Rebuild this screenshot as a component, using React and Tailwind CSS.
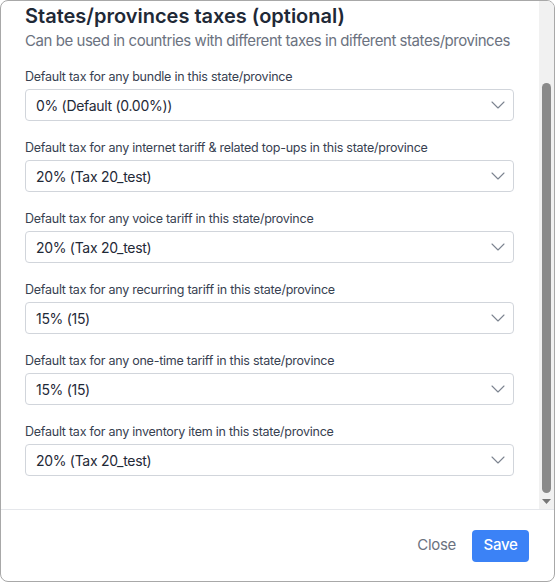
import React from 'react';

const FIELDS = [
  { label: 'Default tax for any bundle in this state/province', value: '0% (Default (0.00%))' },
  { label: 'Default tax for any internet tariff & related top-ups in this state/province', value: '20% (Tax 20_test)' },
  { label: 'Default tax for any voice tariff in this state/province', value: '20% (Tax 20_test)' },
  { label: 'Default tax for any recurring tariff in this state/province', value: '15% (15)' },
  { label: 'Default tax for any one-time tariff in this state/province', value: '15% (15)' },
  { label: 'Default tax for any inventory item in this state/province', value: '20% (Tax 20_test)' },
];

const Chevron = () => (
  <svg width="14" height="8" viewBox="0 0 14 8" fill="none" stroke="#7c8490" strokeWidth="1.1" strokeLinecap="round" strokeLinejoin="round">
    <path d="M1 1l6 6 6-6" />
  </svg>
);

const SelectField = ({ label, value }) => (
  <div>
    <label className="block text-[12.5px] leading-[18px] tracking-[-0.25px] text-[#374151] mb-[3px]">{label}</label>
    <div className="h-8 border border-[#d1d5db] rounded-[4px] flex items-center justify-between pl-[10px] pr-[8px]">
      <span className="text-[14px] tracking-[-0.3px] text-[#1f2937]">{value}</span>
      <Chevron />
    </div>
  </div>
);

// fake scrollbar rail, list is scrolled to the end
const ScrollRail = () => (
  <div className="w-[15px] shrink-0 bg-[#f1f1f1] flex flex-col items-center">
    <div className="flex-1 w-full flex flex-col justify-end pt-[82px] pb-px">
      <div className="mx-auto w-[9px] flex-1 rounded-full bg-[#8a8a8a]" />
    </div>
    <div className="h-[15px] flex items-center justify-center">
      <svg width="9" height="5" viewBox="0 0 9 5">
        <path d="M0 0h9L4.5 5z" fill="#777" />
      </svg>
    </div>
  </div>
);

export default function App() {
  return (
    <div className="w-[555px] h-[582px] bg-white border border-[#a8a8a8] rounded-lg flex flex-col overflow-hidden" style={{ fontFamily: 'Inter, "Noto Sans", sans-serif' }}>
      <div className="flex-1 flex min-h-0">
        <div className="flex-1 min-w-0 overflow-hidden pl-6 pr-[25px] pt-px">
          <h2 className="text-[20px] leading-[28px] font-semibold text-[#1f2937]">States/provinces taxes (optional)</h2>
          <p className="text-[15px] leading-[20px] tracking-[-0.45px] text-[#6b7280] mt-[1px] whitespace-nowrap">Can be used in countries with different taxes in different states/provinces</p>
          <div className="mt-[17px] flex flex-col gap-[18px]">
            {FIELDS.map((f, i) => (
              <SelectField key={i} label={f.label} value={f.value} />
            ))}
          </div>
        </div>
        <ScrollRail />
      </div>
      <div className="h-[72px] shrink-0 border-t border-[#e5e7eb] flex items-center justify-end gap-4 pr-[25px]">
        <button className="text-[15px] tracking-[-0.3px] text-[#6b7280]">Close</button>
        <button className="h-8 w-[57px] rounded-[4px] bg-[#3b82f6] text-white text-[15px] font-medium tracking-[-0.3px]">Save</button>
      </div>
    </div>
  );
}
